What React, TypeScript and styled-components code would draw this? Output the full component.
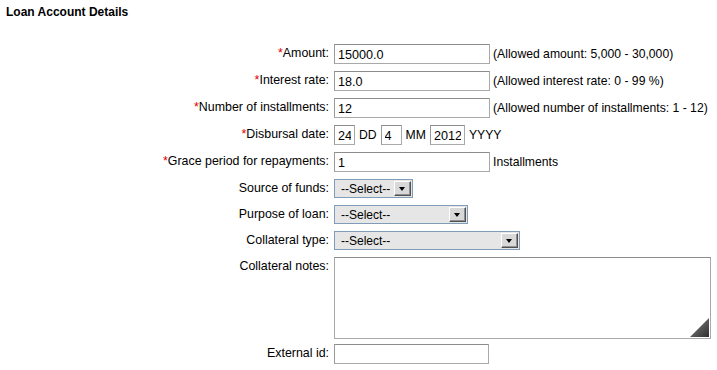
import React from 'react';
import styled, { createGlobalStyle } from 'styled-components';

const GlobalStyle = createGlobalStyle`
    body {
        margin: 0;
        background: #ffffff;
        font-family: "Liberation Sans", Arial, sans-serif;
        font-size: 12px;
        color: #000000;
    }
`;

const Page = styled.div`
    padding: 5px 6px;
`;

const Title = styled.h2`
    font-size: 12px;
    font-weight: 700;
    margin: 0 0 25px 0;
    line-height: 14px;
`;

const Form = styled.div`
    display: grid;
    grid-template-columns: 323px 1fr;
    column-gap: 5px;
    row-gap: 7px;
`;

const Label = styled.label`
    text-align: right;
    padding-top: 2px;
    line-height: 14px;
    font-size: 12.4px;
    white-space: nowrap;
`;

const Required = styled.span`
    color: #e00000;
`;

const Field = styled.div`
    display: flex;
    align-items: center;
    gap: 3px;
    min-height: 19px;
`;

const DateField = styled(Field)`
    gap: 4px;
`;

const TextInput = styled.input<{ $width: number }>`
    box-sizing: border-box;
    width: ${p => p.$width}px;
    height: 20px;
    margin: 0;
    padding: 1px 3px 0;
    border: 1px solid #a9a9a9;
    border-top-color: #8d8d8d;
    border-left-color: #9a9a9a;
    background: #ffffff;
    font-family: "Liberation Sans", Arial, sans-serif;
    font-size: 12.6px;
    color: #000000;
    outline: none;
`;

const Hint = styled.span`
    white-space: nowrap;
    font-size: 12.2px;
`;

const SelectWrap = styled.div<{ $width: number }>`
    position: relative;
    width: ${p => p.$width}px;
    height: 19px;
`;

const Select = styled.select`
    appearance: none;
    box-sizing: border-box;
    width: 100%;
    height: 100%;
    margin: 0;
    padding: 0 20px 0 6px;
    border: 1px solid #7f9db9;
    border-radius: 0;
    background: #e6e6e6;
    font-family: "Liberation Sans", Arial, sans-serif;
    font-size: 12px;
    color: #000000;
    outline: none;
`;

const ArrowButton = styled.span`
    position: absolute;
    top: 2px;
    right: 2px;
    width: 17px;
    height: 15px;
    box-sizing: border-box;
    background: #d8d8d8;
    border-top: 1px solid #ffffff;
    border-left: 1px solid #ffffff;
    border-right: 1px solid #505050;
    border-bottom: 1px solid #505050;
    box-shadow: inset -1px -1px 0 #909090;
    pointer-events: none;

    &::after {
        content: '';
        position: absolute;
        left: 4px;
        top: 5px;
        border-left: 3.5px solid transparent;
        border-right: 3.5px solid transparent;
        border-top: 4px solid #000000;
    }
`;

const NotesWrap = styled.div`
    position: relative;
    width: 377px;
    height: 82px;
    margin-bottom: -2px;
`;

const TextArea = styled.textarea`
    box-sizing: border-box;
    width: 100%;
    height: 100%;
    margin: 0;
    padding: 2px 3px;
    border: 1px solid #a9a9a9;
    border-top-color: #8d8d8d;
    resize: none;
    font-family: "Liberation Sans", Arial, sans-serif;
    font-size: 13px;
    outline: none;
    display: block;
`;

const Grip = styled.span`
    position: absolute;
    right: 2px;
    bottom: 2px;
    width: 19px;
    height: 19px;
    background: linear-gradient(135deg, #8a8a8a 0%, #2e2e2e 100%);
    clip-path: polygon(100% 0, 100% 100%, 0 100%);
    pointer-events: none;
`;

const FormSelect: React.FC<{ width: number }> = ({ width }) => (
    <SelectWrap $width={width}>
        <Select defaultValue="">
            <option value="">--Select--</option>
        </Select>
        <ArrowButton />
    </SelectWrap>
);

export default function App() {
    return (
        <Page>
            <GlobalStyle />
            <Title>Loan Account Details</Title>
            <Form>
                <Label><Required>*</Required>Amount:</Label>
                <Field>
                    <TextInput $width={156} defaultValue="15000.0" />
                    <Hint>(Allowed amount: 5,000 - 30,000)</Hint>
                </Field>

                <Label><Required>*</Required>Interest rate:</Label>
                <Field>
                    <TextInput $width={156} defaultValue="18.0" />
                    <Hint>(Allowed interest rate: 0 - 99 %)</Hint>
                </Field>

                <Label><Required>*</Required>Number of installments:</Label>
                <Field>
                    <TextInput $width={156} defaultValue="12" />
                    <Hint>(Allowed number of installments: 1 - 12)</Hint>
                </Field>

                <Label><Required>*</Required>Disbursal date:</Label>
                <DateField>
                    <TextInput $width={21} defaultValue="24" />
                    <Hint>DD</Hint>
                    <TextInput $width={21} defaultValue="4" />
                    <Hint>MM</Hint>
                    <TextInput $width={35} defaultValue="2012" />
                    <Hint>YYYY</Hint>
                </DateField>

                <Label><Required>*</Required>Grace period for repayments:</Label>
                <Field>
                    <TextInput $width={156} defaultValue="1" />
                    <Hint>Installments</Hint>
                </Field>

                <Label>Source of funds:</Label>
                <Field>
                    <FormSelect width={79} />
                </Field>

                <Label>Purpose of loan:</Label>
                <Field>
                    <FormSelect width={134} />
                </Field>

                <Label>Collateral type:</Label>
                <Field>
                    <FormSelect width={186} />
                </Field>

                <Label>Collateral notes:</Label>
                <Field>
                    <NotesWrap>
                        <TextArea />
                        <Grip />
                    </NotesWrap>
                </Field>

                <Label>External id:</Label>
                <Field>
                    <TextInput $width={155} />
                </Field>
            </Form>
        </Page>
    );
}
